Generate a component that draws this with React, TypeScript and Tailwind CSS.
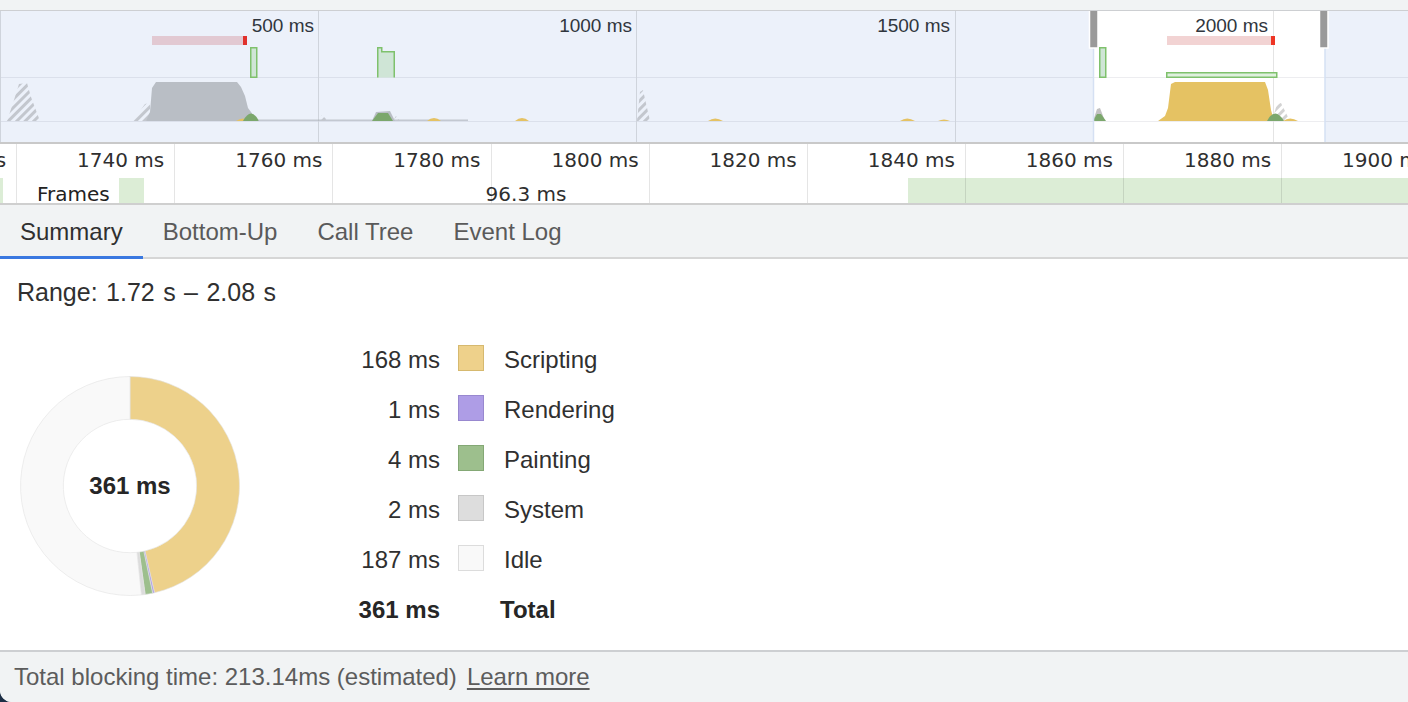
import React from "react";

type Slice = { label: string; ms: number; fill: string; swatch: string };

const slices: Slice[] = [
  { label: "Scripting", ms: 168, fill: "#edd18b", swatch: "bg-[#eed18b] border-[#d6b96f]" },
  { label: "Rendering", ms: 1, fill: "#ae9de6", swatch: "bg-[#ae9de6] border-[#9888cf]" },
  { label: "Painting", ms: 4, fill: "#9dbf8d", swatch: "bg-[#9dbf8d] border-[#84a875]" },
  { label: "System", ms: 2, fill: "#dcdcdc", swatch: "bg-[#dddddd] border-[#c7c7c7]" },
  { label: "Idle", ms: 187, fill: "#f9f9f9", swatch: "bg-[#f9f9f9] border-[#dcdcdc]" },
];

const rulerLabels = ["1720", "1740", "1760", "1780", "1800", "1820", "1840", "1860", "1880", "1900"];
const tabs = ["Summary", "Bottom-Up", "Call Tree", "Event Log"];

// donut slice path, angles in degrees from 12 o'clock going clockwise
function arcPath(a0: number, a1: number, R: number, r: number, c: number): string {
  const pt = (a: number, rad: number) => {
    const t = (a * Math.PI) / 180;
    return `${(c + rad * Math.sin(t)).toFixed(2)},${(c - rad * Math.cos(t)).toFixed(2)}`;
  };
  const large = a1 - a0 > 180 ? 1 : 0;
  return `M${pt(a0, R)} A${R},${R} 0 ${large} 1 ${pt(a1, R)} L${pt(a1, r)} A${r},${r} 0 ${large} 0 ${pt(a0, r)} Z`;
}

function Donut() {
  const total = slices.reduce((s, x) => s + x.ms, 0);
  let acc = 0;
  return (
    <div className="relative w-[222px] h-[222px]">
      <svg width="222" height="222" viewBox="0 0 222 222">
        {slices.map((s) => {
          const a0 = (acc / total) * 360;
          acc += s.ms;
          const a1 = (acc / total) * 360;
          return <path key={s.label} d={arcPath(a0, a1, 109.5, 66.7, 111)} fill={s.fill} stroke="#e2e2e2" strokeWidth="0.6" />;
        })}
      </svg>
      <div className="absolute inset-0 flex items-center justify-center text-[24px] font-bold text-[#262626]">361 ms</div>
    </div>
  );
}

const GREEN = "#7ba76c";
const YELLOW = "#e5c263";
const GRAY = "#b9bec5";

function Overview() {
  return (
    <svg className="block" width="1408" height="131" viewBox="0 11 1408 131">
      <defs>
        <pattern id="hatch" width="6" height="6" patternUnits="userSpaceOnUse" patternTransform="rotate(45)">
          <rect x="0" y="0" width="3" height="6" fill="#c3c7ce" />
        </pattern>
        <pattern id="hatch2" width="6" height="6" patternUnits="userSpaceOnUse" patternTransform="rotate(45)">
          <rect x="0" y="0" width="3" height="6" fill="#d2d2d2" />
        </pattern>
      </defs>
      <rect x="0" y="11" width="1408" height="131" fill="#ecf1fa" />
      <rect x="1093" y="11" width="232" height="131" fill="#ffffff" />

      {/* grid */}
      <line x1="0" y1="77.5" x2="1408" y2="77.5" stroke="#000028" strokeOpacity="0.07" />
      <line x1="0" y1="121.5" x2="1408" y2="121.5" stroke="#000028" strokeOpacity="0.07" />
      <line x1="318.5" y1="11" x2="318.5" y2="142" stroke="#cfd4dc" />
      <line x1="636.5" y1="11" x2="636.5" y2="142" stroke="#cfd4dc" />
      <line x1="955.5" y1="11" x2="955.5" y2="142" stroke="#cfd4dc" />
      <line x1="1273.5" y1="11" x2="1273.5" y2="142" stroke="#e4e4e4" />
      <line x1="0.5" y1="11" x2="0.5" y2="142" stroke="#cfd4dc" />

      <g fontFamily="'Liberation Sans', Arial, sans-serif" fontSize="19" fill="#30363d" textAnchor="end">
        <text x="314" y="32">500 ms</text>
        <text x="632" y="32">1000 ms</text>
        <text x="950" y="32">1500 ms</text>
        <text x="1268" y="32">2000 ms</text>
      </g>

      {/* long tasks */}
      <rect x="152" y="36" width="91" height="9" fill="#e2c9d2" />
      <rect x="243" y="36" width="4" height="9" fill="#e0312c" />
      <rect x="1167" y="36" width="104" height="9" fill="#f2d3d3" />
      <rect x="1271" y="36" width="4" height="9" fill="#ee3424" />

      {/* frames */}
      <g fill="#cfe5d6" stroke="#7fc16c" strokeWidth="1.5">
        <rect x="250.75" y="47.75" width="6" height="29.5" />
        <path d="M377.75,77.5 V47.75 H381.75 V51.75 H394.25 V77.5" />
        <rect x="1099.75" y="47.75" width="6" height="29.5" />
        <rect x="1166.75" y="72.75" width="110" height="4.5" fill="#dff0de" />
      </g>

      {/* activity */}
      <path d="M7,121 L14,100 L19,84 L27,83 L31,97 L37,113 L40,121 Z" fill="url(#hatch)" />
      <path d="M133,121 L145,104 L150,103 L150,121 Z" fill="url(#hatch)" />
      <path d="M146,121 L150,112 L152,88 L156,82 L237,82 L241,87 L245,96 L248,108 L251,112 L255,118 L258,121 Z" fill={GRAY} />
      <path d="M236,121 Q243,116 250,121 Z" fill={YELLOW} />
      <path d="M243,121 Q251,106 259,121 Z" fill={GREEN} />
      <rect x="258" y="119.5" width="210" height="1.5" fill="#a9aeb6" opacity="0.6" />
      <path d="M318,121 L322,115 L328,121 Z" fill="url(#hatch)" />
      <path d="M372,121 L376,112 L390,111 L395,121 Z" fill={GRAY} />
      <path d="M372,121 L378,113 L388,113 L393,121 Z" fill={GREEN} />
      <path d="M393,121 L396,116 L400,121 Z" fill="url(#hatch)" />
      <path d="M427,121 Q434,115 441,121 Z" fill={YELLOW} />
      <path d="M515,121 Q522,115 529,121 Z" fill={YELLOW} />
      <path d="M637,121 L640,92 L643,90 L650,121 Z" fill="url(#hatch)" />
      <path d="M708,121 Q715,116 723,121 Z" fill={YELLOW} />
      <path d="M900,121 Q907,116 915,121 Z" fill={YELLOW} />
      <path d="M938,121 Q944,118 950,121 Z" fill={YELLOW} />

      <path d="M1093,121 L1097,109 L1100,108 L1105,121 Z" fill="#c2c2c2" />
      <path d="M1093,121 L1097,114 L1101,114 L1106,121 Z" fill={GREEN} />
      <path d="M1158,121 L1165,116 L1168,108 L1171,84 L1175,82 L1265,82 L1268,90 L1271,110 L1274,121 Z" fill={YELLOW} />
      <path d="M1272,121 L1277,104 L1281,103 L1290,121 Z" fill="url(#hatch2)" />
      <path d="M1267,121 Q1275,106 1284,121 Z" fill={GREEN} />
      <path d="M1283,121 Q1290,116 1298,121 Z" fill={YELLOW} />

      {/* selection edges + handles */}
      <line x1="1093.5" y1="47" x2="1093.5" y2="142" stroke="#d5e0f3" strokeWidth="1.5" />
      <line x1="1325" y1="47" x2="1325" y2="142" stroke="#d5e0f3" strokeWidth="1.5" />
      <rect x="1089.5" y="10" width="8.5" height="38" fill="#9a9a9a" stroke="#ffffff" strokeWidth="1.5" />
      <rect x="1319.5" y="10" width="8.5" height="38" fill="#9a9a9a" stroke="#ffffff" strokeWidth="1.5" />
    </svg>
  );
}

function Ruler() {
  return (
    <div className="relative h-[61px] border-b-2 border-[#cfcfcf] overflow-hidden font-['DejaVu_Sans',sans-serif] text-[20px] text-[#2f2f2f] shrink-0">
      {/* frames strip */}
      <div className="absolute left-0 right-0 top-[34px] bottom-0 flex">
        <div className="w-[3px] bg-[#dcedd6]" />
        <div className="w-[77px]" />
        <div className="w-[64px] bg-[#dcedd6]" />
        <div className="w-[764px] flex justify-center leading-[32px] whitespace-nowrap">96.3 ms</div>
        <div className="flex-1 bg-[#dcedd6]" />
      </div>
      <div className="relative z-10 flex h-full ml-[-141px]">
        {rulerLabels.map((l) => (
          <div key={l} className="w-[158.125px] shrink-0 h-full border-r border-[rgba(0,0,0,0.1)] text-right pr-[10px] leading-[32px] whitespace-nowrap">
            {l} ms
          </div>
        ))}
      </div>
      <div className="absolute z-20 left-[31px] top-[34px] bottom-0 w-[88px] bg-white pl-[6px] leading-[32px] text-[#222]">Frames</div>
    </div>
  );
}

export default function App() {
  return (
    <div className="w-[1408px] h-[702px] bg-[#1c2e45] overflow-hidden">
      <div className="h-full rounded-bl-[12px] overflow-hidden bg-white flex flex-col font-['Liberation_Sans',Arial,sans-serif] text-[24px] text-[#303030]">
        <div className="h-[11px] bg-[#f1f3f4] border-b border-[#cdcfd2] shrink-0" />
        <div className="border-b-2 border-[#c9c9c9] shrink-0">
          <Overview />
        </div>
        <Ruler />

        <div className="h-[54px] flex bg-[#f1f3f4] shadow-[inset_0_-2px_0_#d6d6d6] shrink-0">
          {tabs.map((t, i) => (
            <div
              key={t}
              className={
                i === 0
                  ? "h-full flex items-center px-[20px] pt-[3px] border-b-[3px] border-[#3a78e0] text-[#303030]"
                  : "h-full flex items-center px-[20px] pt-[3px] border-b-[3px] border-transparent text-[#5a5a5a]"
              }
            >
              {t}
            </div>
          ))}
        </div>

        <div className="flex-1 pl-[17px] pt-[18px]">
          <div className="leading-[30px] text-[25px] [word-spacing:1.5px]">Range: 1.72 s – 2.08 s</div>
          <div className="flex items-start">
            <div className="ml-[2px] mt-[68px]">
              <Donut />
            </div>
            <div className="ml-[99px] mt-[28px]">
              {slices.map((s) => (
                <div key={s.label} className="h-[50px] flex items-center whitespace-nowrap">
                  <div className="w-[100px] text-right">{s.ms} ms</div>
                  <div className={"ml-[18px] w-[26px] h-[26px] border -mt-[5px] " + s.swatch} />
                  <div className="ml-[20px]">{s.label}</div>
                </div>
              ))}
              <div className="h-[50px] flex items-center font-bold text-[#262626] whitespace-nowrap">
                <div className="w-[100px] text-right">361 ms</div>
                <div className="ml-[60px]">Total</div>
              </div>
            </div>
          </div>
        </div>

        <div className="h-[52px] shrink-0 bg-[#f1f3f4] border-t-2 border-[#cdcfd2] flex items-center pl-[14px] text-[#5c5c5c]">
          <span>Total blocking time: 213.14ms (estimated)</span>
          <span className="ml-[10px] underline underline-offset-[3px]">Learn more</span>
        </div>
      </div>
    </div>
  );
}
